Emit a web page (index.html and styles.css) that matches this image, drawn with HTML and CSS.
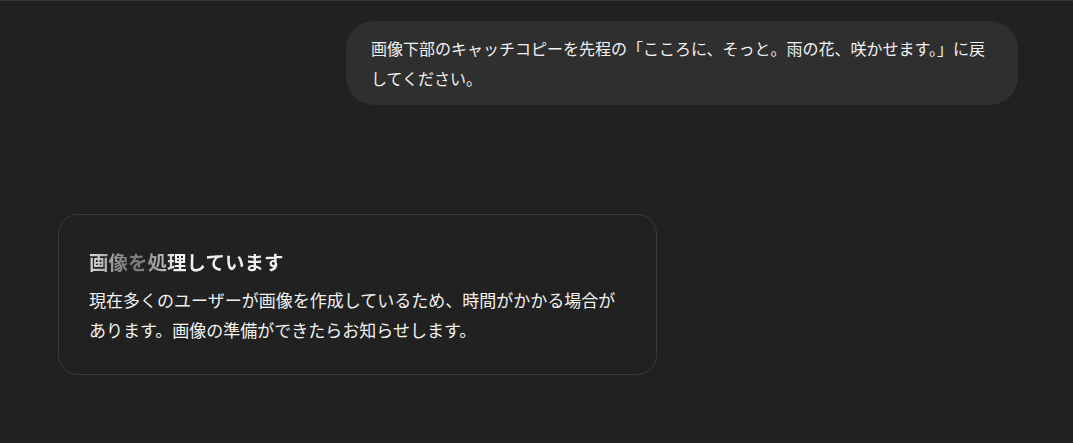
FILE: index.html
```html
<!DOCTYPE html>
<html lang="ja">
<head>
<meta charset="utf-8">
<link rel="stylesheet" href="styles.css">
</head>
<body>
<main class="thread">
  <div class="user-row">
    <div class="bubble">画像下部のキャッチコピーを先程の「こころに、そっと。雨の花、咲かせます。」に戻してください。</div>
  </div>
  <div class="card">
    <div class="card-title">画像を処理しています</div>
    <div class="card-body">現在多くのユーザーが画像を作成しているため、時間がかかる場合があります。画像の準備ができたらお知らせします。</div>
  </div>
</main>
</body>
</html>
```

FILE: styles.css
```css
html, body {
  margin: 0;
  padding: 0;
  background: #212121;
}
body {
  border-top: 1px solid #363636;
  height: 442px;
  overflow: hidden;
  font-family: "Noto Sans CJK JP", "Noto Sans", sans-serif;
  color: #ececec;
}
.thread {
  display: flex;
  flex-direction: column;
  padding: 20px 55px 0 58px;
}
.user-row {
  display: flex;
  justify-content: flex-end;
}
.bubble {
  box-sizing: border-box;
  width: 672px;
  background: #2f2f2f;
  border-radius: 28px;
  padding: 12px 19px 12px 25px;
  font-size: 16px;
  line-height: 30px;
  color: #f2f2f2;
}
.card {
  margin-top: 109px;
  box-sizing: border-box;
  width: 599px;
  border: 1px solid #3a3a3a;
  border-radius: 20px;
  padding: 33px 30px 29px 30px;
}
.card-title {
  display: inline-block;
  font-size: 19.5px;
  font-weight: 600;
  line-height: 28px;
  background: linear-gradient(90deg, #dcdcdc 0%, #b4b4b4 8%, #808080 18%, #7a7a7a 26%, #a8a8a8 36%, #efefef 44%, #efefef 100%);
  -webkit-background-clip: text;
  background-clip: text;
  color: transparent;
}
.card-body {
  margin-top: 9px;
  font-size: 17px;
  line-height: 30px;
  color: #f2f2f2;
}
```
